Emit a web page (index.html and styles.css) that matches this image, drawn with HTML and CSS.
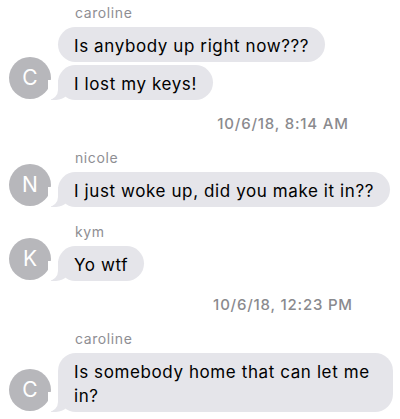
FILE: index.html
```html
<!DOCTYPE html>
<html lang="en">
<head>
<meta charset="utf-8">
<title>Group thread</title>
<link rel="stylesheet" href="styles.css">
</head>
<body>
<div class="thread">
  <div class="group first">
    <div class="sender">caroline</div>
    <div class="row">
      <div class="avatar-slot"></div>
      <div class="bubble">Is anybody up right now???</div>
    </div>
    <div class="row">
      <div class="avatar">C</div>
      <div class="bubble tail">I lost my keys!</div>
    </div>
  </div>

  <div class="timestamp">10/6/18, 8:14 AM</div>

  <div class="group">
    <div class="sender">nicole</div>
    <div class="row">
      <div class="avatar">N</div>
      <div class="bubble tail">I just woke up, did you make it in??</div>
    </div>
  </div>

  <div class="group">
    <div class="sender">kym</div>
    <div class="row">
      <div class="avatar">K</div>
      <div class="bubble tail">Yo wtf</div>
    </div>
  </div>

  <div class="timestamp">10/6/18, 12:23 PM</div>

  <div class="group">
    <div class="sender">caroline</div>
    <div class="row">
      <div class="avatar">C</div>
      <div class="bubble tail">Is somebody home that can let me in?</div>
    </div>
  </div>
</div>
</body>
</html>
```

FILE: styles.css
```css
html, body {
  margin: 0;
  padding: 0;
  background: #ffffff;
}

body {
  font-family: Inter, "Liberation Sans", Arial, sans-serif;
  color: #000000;
  width: 400px;
  overflow: hidden;
}

.thread {
  display: flex;
  flex-direction: column;
  padding: 4px 0 0 0;
}

.group {
  display: flex;
  flex-direction: column;
  margin-top: 16px;
}

.group.first {
  margin-top: 0;
}

.sender {
  font-size: 14px;
  line-height: 18px;
  letter-spacing: 0.6px;
  color: #8e8e93;
  padding-left: 75px;
  margin-bottom: 5px;
}

.row {
  display: flex;
  align-items: flex-end;
  gap: 7px;
  padding-left: 9px;
}

.row + .row {
  margin-top: 3px;
}

.avatar-slot {
  width: 42px;
  flex: 0 0 42px;
}

.avatar {
  width: 42px;
  height: 42px;
  flex: 0 0 42px;
  border-radius: 50%;
  background: #b7b7bb;
  color: #ffffff;
  font-size: 21px;
  line-height: 42px;
  text-align: center;
  margin-top: -10px;
  margin-bottom: 1px;
}

.bubble {
  position: relative;
  box-sizing: border-box;
  background: #e5e5ea;
  border-radius: 18px;
  padding: 7px 16px 4px 16px;
  font-size: 17px;
  line-height: 24px;
  letter-spacing: 0.6px;
  max-width: 335px;
}

.bubble.tail::before {
  content: "";
  position: absolute;
  left: -7px;
  bottom: 0;
  width: 20px;
  height: 20px;
  background: #e5e5ea;
  border-bottom-right-radius: 15px;
}

.bubble.tail::after {
  content: "";
  position: absolute;
  left: -10px;
  bottom: 0;
  width: 10px;
  height: 20px;
  background: #ffffff;
  border-bottom-right-radius: 10px;
}

.timestamp {
  font-size: 15px;
  line-height: 18px;
  font-weight: 500;
  letter-spacing: 0.8px;
  color: #8a8a8e;
  text-align: center;
  padding-left: 166px;
  margin-top: 15px;
}
```
